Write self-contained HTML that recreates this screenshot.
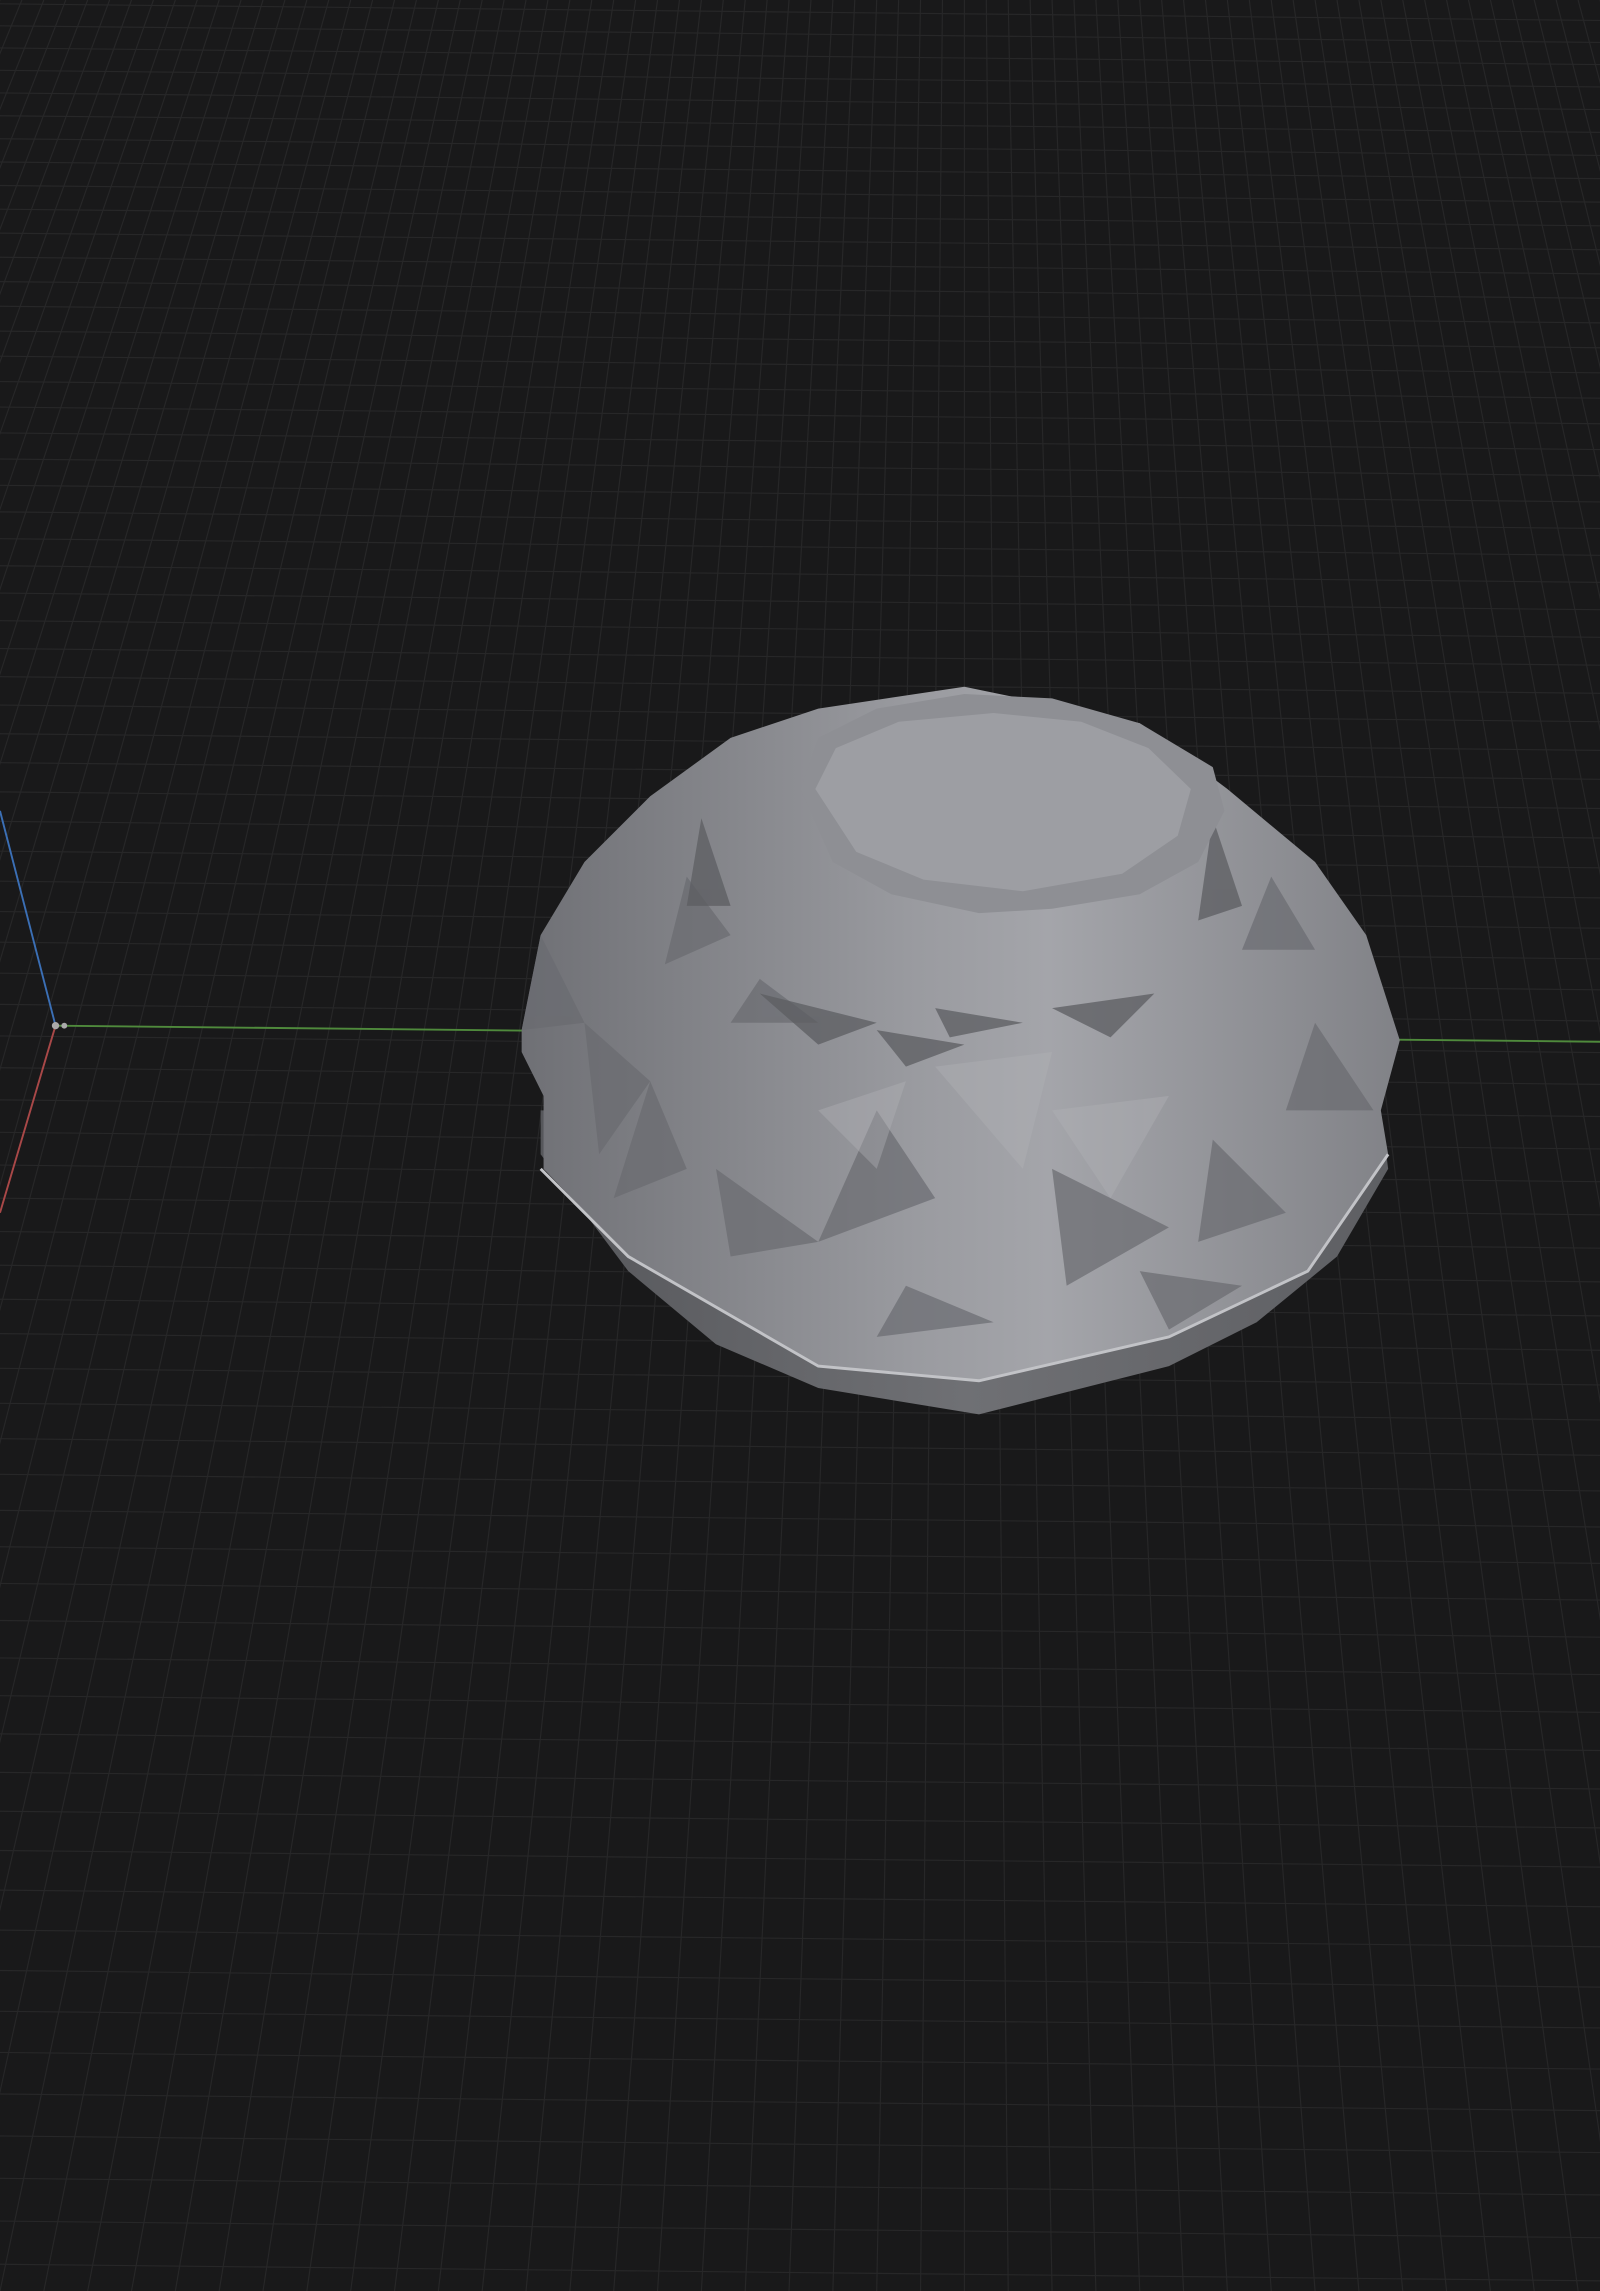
<!DOCTYPE html>
<html><head><meta charset="utf-8"><style>
html,body{margin:0;padding:0;background:#19191a;width:1600px;height:2291px;overflow:hidden}
svg{display:block}
</style></head><body>
<svg id="s" width="1600" height="2291" viewBox="0 0 1095 1568" preserveAspectRatio="none" xmlns="http://www.w3.org/2000/svg">
<defs>
<linearGradient id="body" x1="0" y1="0" x2="1" y2="0">
<stop offset="0" stop-color="#6f7075"/><stop offset="0.45" stop-color="#9a9ba0"/><stop offset="0.6" stop-color="#a4a5aa"/><stop offset="1" stop-color="#818287"/>
</linearGradient>
<linearGradient id="low" x1="0" y1="0" x2="1" y2="0">
<stop offset="0" stop-color="#56575b"/><stop offset="0.5" stop-color="#6f7074"/><stop offset="1" stop-color="#5e5f63"/>
</linearGradient>
</defs>
<rect width="1095" height="1568" fill="#19191a"/>
<g id="grid" stroke="#272728" stroke-width="0.8"></g>
<line x1="38" y1="702" x2="1095" y2="713" stroke="#4f8a3c" stroke-width="1.3"/>
<line x1="0" y1="555" x2="38" y2="702" stroke="#3b6fb5" stroke-width="1.3"/>
<line x1="38" y1="702" x2="0" y2="830" stroke="#a94848" stroke-width="1.3"/>
<circle cx="38" cy="702" r="2.5" fill="#aaa"/><circle cx="44" cy="702" r="2" fill="#aaa"/>
<polygon fill="url(#low)" points="370,790 430,870 490,920 560,950 670,968 800,935 860,905 915,860 950,800 945,760 370,760"/>
<polygon fill="url(#body)" points="357,705 370,640 400,590 445,545 500,505 560,485 660,470 780,495 840,540 900,590 935,640 958,712 945,760 950,790 895,870 800,915 670,945 560,935 430,860 372,800 372,750 357,720"/>
<g fill="#6a6b70" opacity="0.7">
<polygon points="370,640 400,700 357,705"/>
<polygon points="400,700 445,740 410,790"/>
<polygon points="445,740 470,800 420,820"/>
<polygon points="520,670 560,700 500,700"/>
<polygon points="490,800 560,850 500,860"/>
<polygon points="600,760 640,820 560,850"/>
<polygon points="720,800 800,840 730,880"/>
<polygon points="830,780 880,830 820,850"/>
<polygon points="900,700 940,760 880,760"/>
<polygon points="470,600 500,640 455,660"/>
<polygon points="870,600 900,650 850,650"/>
<polygon points="620,880 680,905 600,915"/>
<polygon points="780,870 850,880 800,910"/>
</g>
<g fill="#5c5d61" opacity="0.75">
<polygon points="520,680 600,700 560,715"/>
<polygon points="640,690 700,700 650,710"/>
<polygon points="720,690 790,680 760,710"/>
<polygon points="600,705 660,715 620,730"/>
<polygon points="480,560 500,620 470,620"/>
<polygon points="830,560 850,620 820,630"/>
</g>
<g fill="#b1b2b6" opacity="0.4">
<polygon points="640,730 720,720 700,800"/>
<polygon points="720,760 800,750 760,820"/>
<polygon points="560,760 620,740 600,800"/>
</g>
<polygon fill="#8e8f94" points="548,540 560,505 600,485 660,475 720,478 780,495 830,525 838,555 820,590 780,612 720,622 670,625 610,612 570,590"/>
<polygon fill="#9d9ea3" points="558,540 572,512 615,494 680,488 740,494 786,512 815,540 806,572 768,598 700,610 632,602 586,583"/>
<polyline fill="none" stroke="#c2c3c7" stroke-width="2" points="370,800 430,860 560,935 670,945 800,915 895,870 950,790"/>
</svg>
<script>
var g=document.getElementById('grid'),o='';
var vx=660,vy=-1568;
for(var k=-80;k<=80;k++){var xb=vx+k*30;var xt=vx+(xb-vx)*1568/3136;o+='<line x1="'+xt+'" y1="0" x2="'+xb+'" y2="1568"/>';}
var y=3;while(y<1600){o+='<line x1="0" y1="'+(y-0.38)+'" x2="1095" y2="'+(y+11)+'"/>';y+=15+y*15/1568;}
g.innerHTML=o;
</script>
</body></html>
